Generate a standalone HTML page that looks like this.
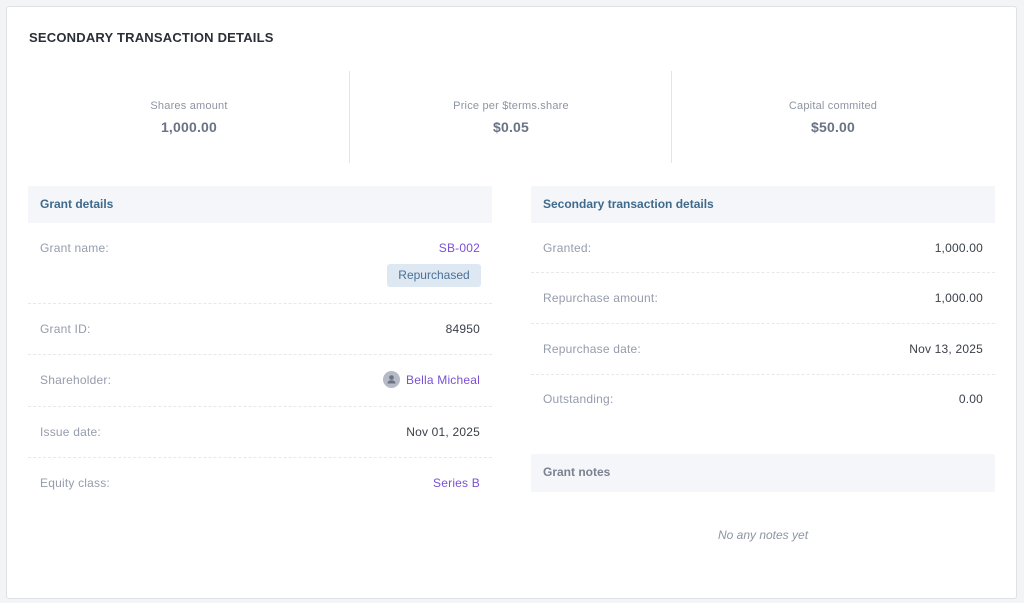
<!DOCTYPE html>
<html><head><style>
body{margin:0;width:1024px;height:603px;background:#f3f4f6;font-family:"Liberation Sans",sans-serif;position:relative;overflow:hidden}
.card{position:absolute;left:6px;top:6px;width:1011px;height:593px;background:#fff;border:1px solid #dfe1e5;border-radius:3px;box-sizing:border-box}
.a{position:absolute}
h1{position:absolute;left:22px;top:23px;margin:0;font-size:13px;font-weight:bold;color:#2b2f36;letter-spacing:.2px}
.stat{position:absolute;top:65px;width:322px;height:92px;text-align:center}
.stat .l{margin-top:28px;font-size:11px;color:#8d95a3;letter-spacing:.2px}
.stat .v{margin-top:7px;font-size:14px;font-weight:bold;color:#6a7385;letter-spacing:.2px}
.div{position:absolute;top:64px;width:1px;height:92px;background:#e2e4e8}
.hd{position:absolute;height:37px;background:#f4f6fa;font-size:12px;font-weight:bold;color:#3f6a8c;line-height:37px;padding-left:12px;box-sizing:border-box;width:464px;border-radius:2px}
.row{position:absolute;width:464px;font-size:12px;color:#959cab;box-sizing:border-box;padding:0 12px;letter-spacing:.2px}
.row .r{position:absolute;right:12px;top:0;color:#3a3f48}
.ln{position:absolute;width:464px;border-top:1px dashed #e6e8ec}
.p{color:#7b4fd6!important}
</style></head><body>
<div class="card">
<h1>SECONDARY TRANSACTION DETAILS</h1>
<div class="stat" style="left:21px"><div class="l">Shares amount</div><div class="v">1,000.00</div></div>
<div class="div" style="left:342px"></div>
<div class="stat" style="left:343px"><div class="l">Price per $terms.share</div><div class="v">$0.05</div></div>
<div class="div" style="left:664px"></div>
<div class="stat" style="left:665px"><div class="l">Capital commited</div><div class="v">$50.00</div></div>

<div class="hd" style="left:21px;top:179px">Grant details</div>
<div class="row" style="left:21px;top:234px">Grant name:<span class="r p">SB-002</span></div>
<div class="a" style="left:380px;top:257px;width:94px;height:23px;background:#dde8f3;border-radius:3px;color:#4b7095;font-size:12px;text-align:center;line-height:23px">Repurchased</div>
<div class="ln" style="left:21px;top:296px"></div>
<div class="row" style="left:21px;top:315px">Grant ID:<span class="r">84950</span></div>
<div class="ln" style="left:21px;top:347px"></div>
<div class="row" style="left:21px;top:366px">Shareholder:<span class="r p" style="display:flex;align-items:center;top:-2px"><svg width="17" height="17" viewBox="0 0 17 17" style="margin-right:6px"><circle cx="8.5" cy="8.5" r="8.5" fill="#b5bac6"/><circle cx="8.5" cy="6.5" r="2.3" fill="#6b7282"/><path d="M4.5 12.5c0-2.2 1.8-3.2 4-3.2s4 1 4 3.2z" fill="#6b7282"/></svg>Bella Micheal</span></div>
<div class="ln" style="left:21px;top:399px"></div>
<div class="row" style="left:21px;top:418px">Issue date:<span class="r">Nov 01, 2025</span></div>
<div class="ln" style="left:21px;top:450px"></div>
<div class="row" style="left:21px;top:469px">Equity class:<span class="r p">Series B</span></div>

<div class="hd" style="left:524px;top:179px">Secondary transaction details</div>
<div class="row" style="left:524px;top:234px">Granted:<span class="r">1,000.00</span></div>
<div class="ln" style="left:524px;top:265px"></div>
<div class="row" style="left:524px;top:284px">Repurchase amount:<span class="r">1,000.00</span></div>
<div class="ln" style="left:524px;top:316px"></div>
<div class="row" style="left:524px;top:335px">Repurchase date:<span class="r">Nov 13, 2025</span></div>
<div class="ln" style="left:524px;top:367px"></div>
<div class="row" style="left:524px;top:385px">Outstanding:<span class="r">0.00</span></div>
<div class="hd" style="left:524px;top:447px;height:38px;line-height:36px;color:#7a8290">Grant notes</div>
<div class="a" style="left:524px;top:521px;width:464px;text-align:center;font-size:12px;font-style:italic;color:#8d95a3">No any notes yet</div>
</div>
</body></html>
